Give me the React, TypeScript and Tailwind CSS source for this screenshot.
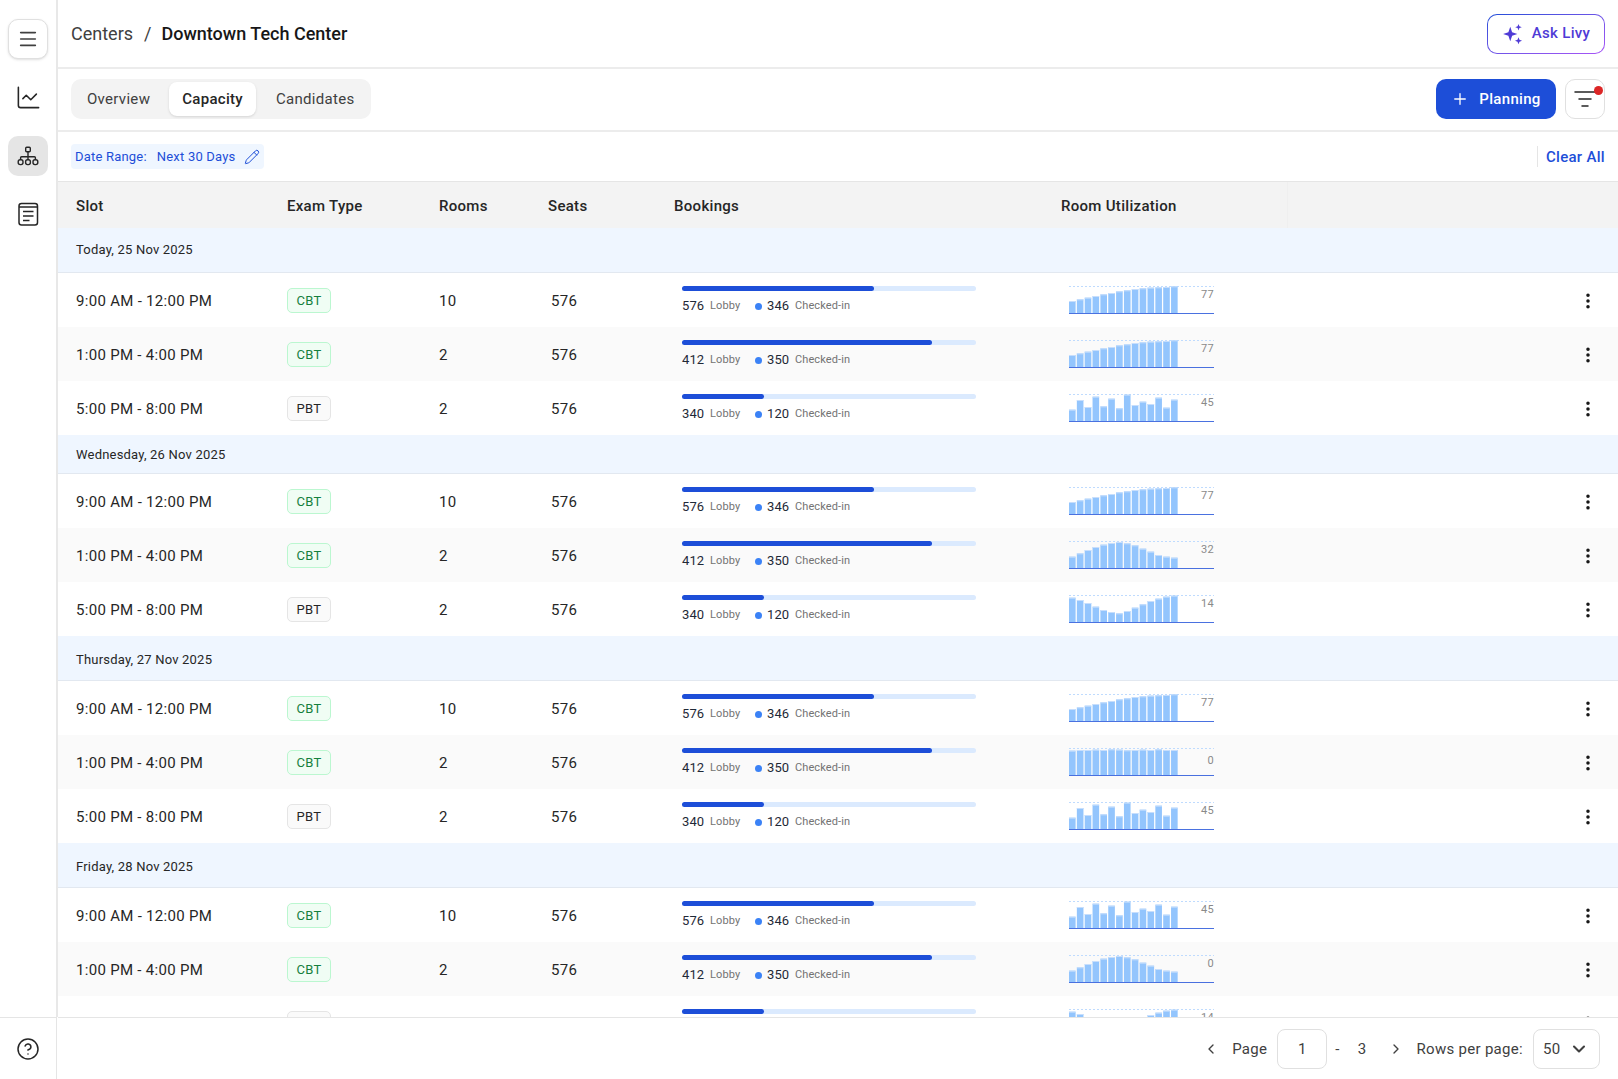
import {
  ChartLine,
  ChevronDown,
  ChevronLeft,
  ChevronRight,
  CircleHelp,
  EllipsisVertical,
  ListFilter,
  Menu,
  Pencil,
  Plus,
} from "lucide-react"

const rise = [36, 41, 46, 51, 56, 60, 65, 68, 72, 74, 76, 77, 78, 80]
const bell = [34, 44, 54, 63, 70, 75, 78, 74, 68, 58, 49, 39, 34, 31]
const valley = [73, 66, 57, 46, 36, 30, 26, 33, 43, 53, 63, 70, 76, 79]
const flat = [73, 75, 75, 76, 75, 77, 76, 74, 75, 76, 75, 77, 75, 75]
const jagged = [34, 63, 42, 73, 44, 67, 38, 79, 48, 58, 51, 70, 40, 64]

interface Slot {
  time: string
  exam: "CBT" | "PBT"
  rooms: number
  lobby: number
  checkedIn: number
  progress: number
  bars: number[]
  label: number
}

function slots(a: [number[], number], b: [number[], number], c: [number[], number]): Slot[] {
  return [
    { time: "9:00 AM - 12:00 PM", exam: "CBT", rooms: 10, lobby: 576, checkedIn: 346, progress: 65.3, bars: a[0], label: a[1] },
    { time: "1:00 PM - 4:00 PM", exam: "CBT", rooms: 2, lobby: 412, checkedIn: 350, progress: 85, bars: b[0], label: b[1] },
    { time: "5:00 PM - 8:00 PM", exam: "PBT", rooms: 2, lobby: 340, checkedIn: 120, progress: 28, bars: c[0], label: c[1] },
  ]
}

const groups = [
  { title: "Today, 25 Nov 2025", height: "h-[45px]", rows: slots([rise, 77], [rise, 77], [jagged, 45]) },
  { title: "Wednesday, 26 Nov 2025", height: "h-[39px] pt-[2px]", rows: slots([rise, 77], [bell, 32], [valley, 14]) },
  { title: "Thursday, 27 Nov 2025", height: "h-[45px] pt-[3px]", rows: slots([rise, 77], [flat, 0], [jagged, 45]) },
  { title: "Friday, 28 Nov 2025", height: "h-[45px] pt-[3px]", rows: slots([jagged, 45], [bell, 0], [valley, 14]) },
]

function MiniChart({ bars, label }: { bars: number[]; label: number }) {
  return (
    <svg width="145" height="28" viewBox="0 0 145 28" className="block">
      <line x1="0" x2="145" y1="0.5" y2="0.5" stroke="#bfdbfe" strokeDasharray="2 2" />
      {bars.map((h, i) => {
        const height = h / 3
        return (
          <g key={i}>
            <rect x={i * 7.85} y={27 - height} width="6.6" height={height} fill="#93c5fd" />
            <rect x={i * 7.85} y={27 - height} width="6.6" height="1" fill="#c7defc" />
          </g>
        )
      })}
      <line x1="0" x2="145" y1="27.5" y2="27.5" stroke="#1d4ed8" strokeOpacity="0.8" />
      <text x="145" y={bars === flat ? 16 : 12} textAnchor="end" fontSize="11" fill="#8a8a8a">
        {label}
      </text>
    </svg>
  )
}

function ExamBadge({ exam }: { exam: "CBT" | "PBT" }) {
  return (
    <span
      className={`flex h-[25px] w-[44px] items-center justify-center rounded-[5px] border pt-px text-[13px] font-[450] tracking-[0.3px] ${
        exam === "CBT"
          ? "border-[#bbf7d0] bg-[#f0fdf4] text-[#15803d]"
          : "border-[#e5e5e5] bg-[#fafafa] text-[#262626]"
      }`}
    >
      {exam}
    </span>
  )
}

function SlotRow({ row, striped }: { row: Slot; striped: boolean }) {
  return (
    <div className={`flex h-[54px] items-center pl-[18px] text-[15px] tracking-[0.3px] text-[#262626] ${striped ? "bg-[#fafafa]" : "bg-white"}`}>
      <div className="w-[211px] pt-[2px]">{row.time}</div>
      <div className="w-[152px]">
        <ExamBadge exam={row.exam} />
      </div>
      <div className="w-[109px] pt-[2px]">{row.rooms}</div>
      <div className="w-[126px] pt-[2px] pl-[3px]">576</div>
      <div className="w-[387px] pl-2">
        <div className="h-[5px] w-[294px] rounded-full bg-[#dbeafe]">
          <div className="h-full rounded-full bg-[#1d4ed8]" style={{ width: `${row.progress}%` }} />
        </div>
        <div className="mt-[7px] flex h-4 items-center tracking-[0.1px]">
          <span className="w-[28px] text-[13px] font-[450] text-[#1f2937]">{row.lobby}</span>
          <span className="w-[45px] text-[11px] text-[#737373]">Lobby</span>
          <span className="mr-[5px] h-[7px] w-[7px] rounded-full bg-[#3b82f6]" />
          <span className="w-[28px] text-[13px] font-[450] text-[#1f2937]">{row.checkedIn}</span>
          <span className="text-[11px] text-[#737373]">Checked-in</span>
        </div>
      </div>
      <div className="ml-2 w-[145px]">
        <MiniChart bars={row.bars} label={row.label} />
      </div>
      <div className="ml-auto flex w-[60px] justify-center pt-px">
        <EllipsisVertical className="h-5 w-5 text-[#171717]" strokeWidth={2.25} />
      </div>
    </div>
  )
}

function OrgIcon() {
  return (
    <svg width="24" height="24" viewBox="0 0 24 24" fill="none" stroke="#262626" strokeWidth="1.4">
      <rect x="9.7" y="3.2" width="4.6" height="4.6" rx="1" />
      <rect x="2.2" y="15.8" width="4.8" height="4.8" rx="2" />
      <rect x="9.6" y="15.8" width="4.8" height="4.8" rx="2" />
      <rect x="17" y="15.8" width="4.8" height="4.8" rx="2" />
      <path d="M12 7.8v8M4.6 15.8v-2a1 1 0 0 1 1-1h12.8a1 1 0 0 1 1 1v2" />
    </svg>
  )
}

function ReportIcon() {
  return (
    <svg width="24" height="24" viewBox="0 0 24 24" fill="none" stroke="#262626" strokeWidth="1.5">
      <rect x="3" y="1.4" width="18.5" height="21.5" rx="2.5" />
      <path d="M3 5h18.5M7 9.6h10.5M7 14h10.5M7 18.6h6.5" />
    </svg>
  )
}

function SparkleIcon() {
  return (
    <svg width="22" height="22" viewBox="0 0 20 20" fill="#4f3bd6">
      <path d="M7.5 3.5 9.2 8.3l4.8 1.7-4.8 1.7-1.7 4.8-1.7-4.8L1 10l4.8-1.7z" />
      <path d="M15 0.8l.8 2.2 2.2.8-2.2.8-.8 2.2-.8-2.2-2.2-.8 2.2-.8z" />
      <path d="M15 13l.9 2.3 2.3.9-2.3.9-.9 2.3-.9-2.3-2.3-.9 2.3-.9z" />
    </svg>
  )
}

export default function App() {
  return (
    <div className="flex h-[1079px] w-[1618px] overflow-hidden bg-white font-['Roboto',sans-serif] text-[#262626]">
      <aside className="flex w-[58px] shrink-0 flex-col">
        <div className="flex flex-1 flex-col items-center border-r-2 border-[#e8e8e8] pt-[19px]">
          <button className="flex h-10 w-10 items-center justify-center rounded-[10px] border border-[#e0e0e0] bg-white shadow-sm">
            <Menu className="h-[22px] w-[22px] text-[#404040]" strokeWidth={1.75} />
          </button>
          <div className="mt-[18px] flex h-10 w-10 items-center justify-center">
            <ChartLine className="h-[27px] w-[27px] text-[#262626]" strokeWidth={1.4} />
          </div>
          <div className="mt-[19px] flex h-10 w-10 items-center justify-center rounded-[10px] bg-[#e5e5e5]">
            <OrgIcon />
          </div>
          <div className="mt-[18px] flex h-10 w-10 items-center justify-center">
            <ReportIcon />
          </div>
        </div>
        <div className="flex h-[62px] w-[57px] items-center justify-center border-t border-r border-[#e5e5e5]">
          <CircleHelp className="h-6 w-6 text-[#262626]" strokeWidth={1.5} />
        </div>
      </aside>

      <main className="flex min-w-0 flex-1 flex-col">
        <header className="flex h-[69px] shrink-0 items-center justify-between border-b-2 border-[#ececec] pr-[13px] pl-[13px]">
          <div className="flex items-center text-[18px]">
            <span className="text-[#404040]">Centers</span>
            <span className="mr-[10px] ml-[11px] text-[#404040]">/</span>
            <span className="font-medium text-[#171717]">Downtown Tech Center</span>
          </div>
          <div className="rounded-[10px] bg-gradient-to-br from-[#1d4ed8] to-[#a855f7] p-px">
            <button className="flex h-[38px] w-[116px] items-center justify-center gap-2 rounded-[9px] bg-white text-[15px] font-medium tracking-[0.3px] text-[#4f3bd6]">
              <SparkleIcon />
              Ask Livy
            </button>
          </div>
        </header>

        <div className="flex h-[63px] shrink-0 items-center justify-between border-b-2 border-[#ececec] pr-[13px] pb-px pl-[13px]">
          <div className="flex h-10 items-center rounded-[10px] bg-[#f3f3f3] px-[3px] text-[15px] tracking-[0.3px] text-[#404040]">
            <span className="pr-[19px] pl-[13px]">Overview</span>
            <span className="flex h-[34px] items-center rounded-lg bg-white px-[13px] font-medium text-[#262626] shadow-sm">Capacity</span>
            <span className="pr-[13px] pl-[20px]">Candidates</span>
          </div>
          <div className="flex items-center gap-[9px]">
            <button className="flex h-10 w-[120px] items-center justify-center gap-[10px] rounded-[10px] bg-[#1d4ed8] text-[15px] font-medium tracking-[0.3px] text-white">
              <Plus className="h-[18px] w-[18px]" strokeWidth={1.75} />
              Planning
            </button>
            <button className="relative flex h-10 w-10 items-center justify-center rounded-[10px] border border-[#e0e0e0] bg-white">
              <ListFilter className="h-6 w-6 text-[#262626]" strokeWidth={1.5} />
              <span className="absolute top-[6px] right-[1px] h-[9px] w-[9px] rounded-full bg-[#dc2626]" />
            </button>
          </div>
        </div>

        <div className="flex h-[50px] shrink-0 items-center justify-between border-b border-[#e5e5e5] pr-[13px] pl-[13px]">
          <div className="flex h-[25px] w-[193px] items-center rounded bg-[#eff6ff] pl-[4px] text-[13px] font-[450] tracking-[0.2px] whitespace-nowrap text-[#1d4ed8]">
            <span>Date Range:</span>
            <span className="ml-[10px]">Next 30 Days</span>
            <Pencil className="ml-[9px] h-4 w-4" strokeWidth={1.5} />
          </div>
          <div className="flex items-center">
            <span className="mr-[8px] h-[21px] w-px bg-[#e5e5e5]" />
            <span className="pt-[2px] text-[15px] font-medium tracking-[0.3px] text-[#1d4ed8]">Clear All</span>
          </div>
        </div>

        <div className="min-h-0 flex-1 overflow-hidden">
          <div className="flex h-[46px] items-center bg-[#f3f3f3] pl-[18px] text-[15px] font-medium tracking-[0.3px] text-[#262626]">
            <div className="w-[211px] pt-[2px]">Slot</div>
            <div className="w-[152px] pt-[2px]">Exam Type</div>
            <div className="w-[109px] pt-[2px]">Rooms</div>
            <div className="w-[126px] pt-[2px]">Seats</div>
            <div className="w-[387px] pt-[2px]">Bookings</div>
            <div className="flex h-full w-[227px] items-center border-r border-[#efefef] pt-[2px]">Room Utilization</div>
          </div>
          {groups.map((group) => (
            <div key={group.title}>
              <div className={`flex ${group.height} items-center border-b border-[#e2e8f0] bg-[#eff6ff] pl-[18px] text-[13px] font-[450] tracking-[0.2px] text-[#262626]`}>
                {group.title}
              </div>
              {group.rows.map((row, i) => (
                <SlotRow key={row.time} row={row} striped={i === 1} />
              ))}
            </div>
          ))}
        </div>

        <footer className="flex h-[62px] shrink-0 items-center justify-end border-t border-[#e5e5e5] pr-[18px] text-[15px] tracking-[0.3px] text-[#404040]">
          <ChevronLeft className="h-4 w-4" />
          <span className="ml-[13px] pt-[2px]">Page</span>
          <span className="ml-[10px] flex h-10 w-[50px] items-center justify-center rounded-lg border border-[#e0e0e0] pt-[2px]">1</span>
          <span className="ml-[8px] pt-[2px]">-</span>
          <span className="ml-[18px] pt-[2px]">3</span>
          <ChevronRight className="ml-[22px] h-4 w-4" />
          <span className="ml-[12px] pt-[2px]">Rows per page:</span>
          <span className="ml-[10px] flex h-10 w-[67px] items-center justify-between rounded-lg border border-[#e0e0e0] pt-[1px] pr-[10px] pl-[9px]">
            50
            <ChevronDown className="h-5 w-5" strokeWidth={2.5} />
          </span>
        </footer>
      </main>
    </div>
  )
}
